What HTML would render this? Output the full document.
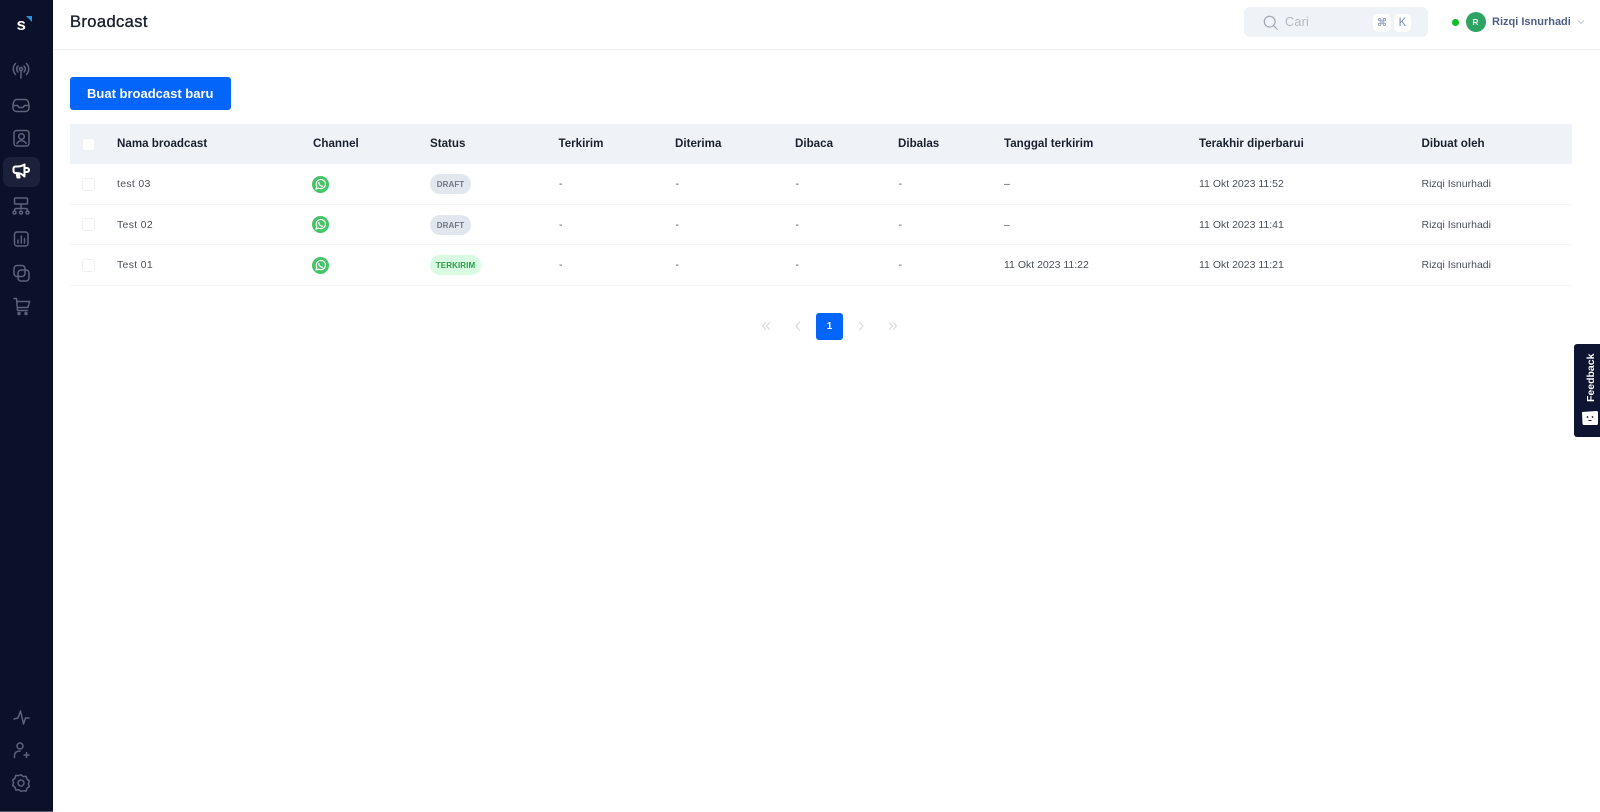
<!DOCTYPE html>
<html><head><meta charset="utf-8"><style>
html,body{margin:0;padding:0;width:1600px;height:812px;overflow:hidden;background:#fff;font-family:"Liberation Sans",sans-serif}
.a{position:absolute;white-space:nowrap}
#side{left:0;top:0;width:52.5px;height:811px;background:#0a1129}
#side svg{position:absolute;left:9px;width:24px;height:24px;fill:none;stroke:#5d6378;stroke-width:1.5;stroke-linecap:round;stroke-linejoin:round}
.th{top:137px;font-size:11.6px;line-height:14px;font-weight:bold;color:#1b2030}
.td{font-size:10.5px;line-height:13px;color:#4b505b}
.n{letter-spacing:.3px}
.cb{left:82px;width:11px;height:11px;border:1px solid #eef0f4;border-radius:3px;background:#fff}
.ln{left:70px;width:1502px;height:1px;background:#f4f5f8}
.bd{left:430px;height:20px;border-radius:10px;font-size:8px;line-height:21px;font-weight:bold;text-align:center;letter-spacing:.1px}
.wa{left:312px;width:17px;height:17px}
.pg{top:319px;width:14px;height:14px;fill:none;stroke:#d5d8de;stroke-width:1.1;stroke-linecap:round;stroke-linejoin:round}
</style></head><body>
<div class="a" id="side">
<div class="a" style="left:3px;top:156.5px;width:37px;height:30px;border-radius:7px;background:#1a2139"></div>
<div class="a" style="left:16.5px;top:14px;font:bold 17px/22px 'Liberation Sans',sans-serif;color:#fff">s</div>
<svg style="left:26px;top:16px;width:6px;height:6px;stroke:none" viewBox="0 0 6 6"><path d="M0 0H6V6Z" style="fill:#2f8fd8;stroke:none"/></svg>
<svg style="top:58px" viewBox="0 0 24 24"><circle cx="12" cy="11" r="1.6"/><path d="M12 12.6V20M9 14a4 4 0 0 1 0-6M15 8a4 4 0 0 1 0 6M6.5 16.5a8 8 0 0 1 0-11M17.5 5.500a8 8 0 0 1 0 11"/></svg>
<svg style="top:93px" viewBox="0 0 24 24"><path d="M7.500 6.500h9c2 0 3.500 3 3.500 6v2.500a3.500 3.500 0 0 1-3.500 3.500h-9A3.500 3.500 0 0 1 4 15v-2.500c0-3 1.500-6 3.500-6z"/><path d="M4 12.500h4.500l1.500 2h4l1.500-2H20"/></svg>
<svg style="top:126px" viewBox="0 0 24 24"><rect x="5" y="4.500" width="15" height="15.500" rx="2.500"/><circle cx="12.500" cy="10.500" r="2.800"/><path d="M8 17.500c.8-2 2.500-2.800 4.500-2.800s3.700.8 4.500 2.800"/></svg>
<svg style="top:159px;stroke:#fff;stroke-width:2.1" viewBox="0 0 24 24"><path d="M15.500 5.500v12c-2.500-2.500-5-3.500-7-3.500h-2a2 2 0 0 1-2-2V9.500a2 2 0 0 1 2-2h2c2 0 4.500-.5 7-2zM7.500 14l1 4.500h2l-.8-4M15.500 9h2.500a2 2 0 0 1 0 4h-2.500"/></svg>
<svg style="top:194px" viewBox="0 0 24 24"><rect x="5.500" y="4" width="13" height="6" rx="1"/><path d="M12 10v5M5.500 17v-1a1.500 1.500 0 0 1 1.500-1.500h10a1.500 1.500 0 0 1 1.500 1.500v1"/><circle cx="5.500" cy="18.500" r="1.500"/><circle cx="12" cy="18.500" r="1.500"/><circle cx="18.500" cy="18.500" r="1.500"/></svg>
<svg style="top:227px" viewBox="0 0 24 24"><rect x="5.500" y="5" width="13.500" height="14" rx="2.500"/><path d="M9 16v-3M12.300 16V9M15.500 16v-4.500"/></svg>
<svg style="top:261px" viewBox="0 0 24 24"><rect x="5" y="4.500" width="11" height="11" rx="3"/><rect x="9" y="9" width="11" height="11" rx="3"/></svg>
<svg style="top:294px" viewBox="0 0 24 24"><path d="M5 4.500h2.500l1 12h10M8 7.500h12.500l-1.500 6H8.500"/><circle cx="10" cy="19.500" r="1"/><circle cx="17" cy="19.500" r="1"/></svg>
<svg style="top:705px" viewBox="0 0 24 24"><path d="M5 14l4-1 2.500-7 3 13 2-6h3.500"/></svg>
<svg style="top:738px" viewBox="0 0 24 24"><circle cx="11" cy="8" r="3"/><path d="M5.500 19.500v-2c0-2.500 2-4.500 5.500-4.500M15 17h5M17.500 14.500v5"/></svg>
<svg style="top:771px" viewBox="0 0 24 24"><path d="M12 4l2.300 1.800 2.900-.2.800 2.800 2.300 1.700-.9 2.800.9 2.800-2.300 1.700-.8 2.800-2.900-.2L12 20.500l-2.300-1.500-2.900.2-.8-2.800-2.300-1.700.9-2.800-.9-2.800 2.300-1.700.8-2.800 2.900.2z" transform="translate(0 -.2)"/><circle cx="12" cy="12" r="3"/></svg>
</div>
<div class="a" style="left:0;top:811px;width:52.500px;height:1px;background:#54596c"></div>

<div class="a" style="left:70px;top:12px;font-size:16.500px;line-height:20px;color:#1a1f2c;letter-spacing:.4px;-webkit-text-stroke:.35px #1a1f2c">Broadcast</div>
<div class="a" style="left:52.500px;top:49px;width:1548px;height:1px;background:#eceef1"></div>

<div class="a" style="left:1244px;top:7px;width:184px;height:30px;border-radius:6px;background:#eff2f7"></div>
<svg class="a" style="left:1263px;top:15px;width:15px;height:15px;fill:none;stroke:#a0a7b3;stroke-width:1.400;stroke-linecap:round" viewBox="0 0 18 18"><circle cx="8" cy="8" r="6.500"/><path d="M12.800 12.800L17 17"/></svg>
<div class="a" style="left:1285px;top:14px;font-size:12.500px;line-height:16px;color:#b3b9c4;letter-spacing:.3px">Cari</div>
<div class="a" style="left:1373px;top:13.500px;width:18px;height:18px;border-radius:5px;background:#fff;color:#7d90b3;font:10.500px/18px 'DejaVu Sans',sans-serif;text-align:center">⌘</div>
<div class="a" style="left:1394px;top:13.500px;width:17px;height:18px;border-radius:5px;background:#fff;color:#7d90b3;font-size:11.500px;line-height:18px;text-align:center">K</div>
<div class="a" style="left:1452px;top:19px;width:6.500px;height:6.500px;border-radius:50%;background:#0fbf27"></div>
<div class="a" style="left:1465.500px;top:12px;width:20px;height:20px;border-radius:50%;background:#2ea463;color:#e8f5ee;font-size:8.500px;line-height:21px;font-weight:bold;text-align:center">R</div>
<div class="a" style="left:1492px;top:15px;font-size:11px;line-height:14px;font-weight:bold;color:#4e5f85">Rizqi Isnurhadi</div>
<svg class="a" style="left:1577px;top:19px;width:8px;height:6px;fill:none;stroke:#c2c6ce;stroke-width:1" viewBox="0 0 8 6"><path d="M1 1.500L4 4.500L7 1.500"/></svg>

<div class="a" style="left:70px;top:77px;width:160.500px;height:33px;border-radius:3px;background:#0465fb;color:#fff;font-size:13px;line-height:33px;font-weight:bold;text-align:center">Buat broadcast baru</div>

<div class="a" style="left:70px;top:124px;width:1502px;height:40px;background:#eff2f7"></div>
<div class="a cb" style="top:137.500px"></div>
<div class="a th" style="left:117px">Nama broadcast</div>
<div class="a th" style="left:313px">Channel</div>
<div class="a th" style="left:430px">Status</div>
<div class="a th" style="left:558.500px">Terkirim</div>
<div class="a th" style="left:675px">Diterima</div>
<div class="a th" style="left:795px">Dibaca</div>
<div class="a th" style="left:898px">Dibalas</div>
<div class="a th" style="left:1004px">Tanggal terkirim</div>
<div class="a th" style="left:1199px">Terakhir diperbarui</div>
<div class="a th" style="left:1421.500px">Dibuat oleh</div>

<div class="a ln" style="top:204px"></div>
<div class="a ln" style="top:244px"></div>
<div class="a ln" style="top:284.500px"></div>

<!-- row 1 -->
<div class="a cb" style="top:178px"></div>
<div class="a td n" style="left:117px;top:178px">test 03</div>
<svg class="a wa" style="top:176px" viewBox="0 0 17 17"><circle cx="8.500" cy="8.500" r="8.500" fill="#43c565"/><path d="M4 13l.8-2.700a4.600 4.600 0 1 1 1.800 1.800z" fill="none" stroke="#fff" stroke-width="1.200" stroke-linejoin="round"/><path d="M6.800 6.500c0 2 1.500 3.700 3.600 3.800" fill="none" stroke="#fff" stroke-width="1.300" stroke-linecap="round"/></svg>
<div class="a bd" style="top:174px;width:41px;background:#e2e6ee;color:#6f7785">DRAFT</div>
<div class="a td" style="left:559px;top:178px">-</div><div class="a td" style="left:675.500px;top:178px">-</div><div class="a td" style="left:795.500px;top:178px">-</div><div class="a td" style="left:898.500px;top:178px">-</div>
<div class="a td" style="left:1004px;top:178px">–</div>
<div class="a td" style="left:1199px;top:178px">11 Okt 2023 11:52</div>
<div class="a td" style="left:1421.500px;top:178px">Rizqi Isnurhadi</div>

<!-- row 2 -->
<div class="a cb" style="top:218px"></div>
<div class="a td n" style="left:117px;top:219px">Test 02</div>
<svg class="a wa" style="top:216px" viewBox="0 0 17 17"><circle cx="8.500" cy="8.500" r="8.500" fill="#43c565"/><path d="M4 13l.8-2.700a4.600 4.600 0 1 1 1.800 1.800z" fill="none" stroke="#fff" stroke-width="1.200" stroke-linejoin="round"/><path d="M6.800 6.500c0 2 1.500 3.700 3.600 3.800" fill="none" stroke="#fff" stroke-width="1.300" stroke-linecap="round"/></svg>
<div class="a bd" style="top:214.500px;width:41px;background:#e2e6ee;color:#6f7785">DRAFT</div>
<div class="a td" style="left:559px;top:219px">-</div><div class="a td" style="left:675.500px;top:219px">-</div><div class="a td" style="left:795.500px;top:219px">-</div><div class="a td" style="left:898.500px;top:219px">-</div>
<div class="a td" style="left:1004px;top:219px">–</div>
<div class="a td" style="left:1199px;top:219px">11 Okt 2023 11:41</div>
<div class="a td" style="left:1421.500px;top:219px">Rizqi Isnurhadi</div>

<!-- row 3 -->
<div class="a cb" style="top:258.500px"></div>
<div class="a td n" style="left:117px;top:259px">Test 01</div>
<svg class="a wa" style="top:257px" viewBox="0 0 17 17"><circle cx="8.500" cy="8.500" r="8.500" fill="#43c565"/><path d="M4 13l.8-2.700a4.600 4.600 0 1 1 1.800 1.800z" fill="none" stroke="#fff" stroke-width="1.200" stroke-linejoin="round"/><path d="M6.800 6.500c0 2 1.500 3.700 3.600 3.800" fill="none" stroke="#fff" stroke-width="1.300" stroke-linecap="round"/></svg>
<div class="a bd" style="top:255px;width:51px;background:#d9fbe1;color:#2b9b49">TERKIRIM</div>
<div class="a td" style="left:559px;top:259px">-</div><div class="a td" style="left:675.500px;top:259px">-</div><div class="a td" style="left:795.500px;top:259px">-</div><div class="a td" style="left:898.500px;top:259px">-</div>
<div class="a td" style="left:1004px;top:259px">11 Okt 2023 11:22</div>
<div class="a td" style="left:1199px;top:259px">11 Okt 2023 11:21</div>
<div class="a td" style="left:1421.500px;top:259px">Rizqi Isnurhadi</div>

<!-- pagination -->
<svg class="a pg" style="left:759px" viewBox="0 0 14 14"><path d="M6.500 3.500L3.500 7l3 3.500M10.500 3.500L7.500 7l3 3.500"/></svg>
<svg class="a pg" style="left:791px" viewBox="0 0 14 14"><path d="M8.500 3L5 7l3.500 4"/></svg>
<div class="a" style="left:816px;top:313px;width:27px;height:26.500px;border-radius:3px;background:#0465fb;color:#fff;font-size:10px;line-height:27px;font-weight:bold;text-align:center">1</div>
<svg class="a pg" style="left:854px" viewBox="0 0 14 14"><path d="M5.500 3L9 7l-3.500 4"/></svg>
<svg class="a pg" style="left:886px" viewBox="0 0 14 14"><path d="M3.500 3.500l3 3.500-3 3.500M7.500 3.500l3 3.500-3 3.500"/></svg>

<!-- feedback -->
<div class="a" style="left:1574px;top:344px;width:26px;height:93px;background:#0d1532;border-radius:3px 0 0 3px"></div>
<div class="a" style="left:1585px;top:353px;height:49px;width:12px;writing-mode:vertical-rl;transform:rotate(180deg);color:#fff;font-size:10.500px;line-height:12px;font-weight:bold;text-align:center">Feedback</div>
<svg class="a" style="left:1582px;top:411px;width:16px;height:14px" viewBox="0 0 16 14"><path d="M0 1l14.500-1A1.500 1.500 0 0 1 16 1.500V12.500A1.500 1.500 0 0 1 14.500 14H2A1.500 1.500 0 0 1 .5 12.500z" fill="#fff"/><circle cx="5.500" cy="6" r=".9" fill="#0d1532"/><circle cx="10.500" cy="6" r=".9" fill="#0d1532"/><path d="M6.500 9.500h3" stroke="#0d1532" stroke-width="1"/></svg>
</body></html>
